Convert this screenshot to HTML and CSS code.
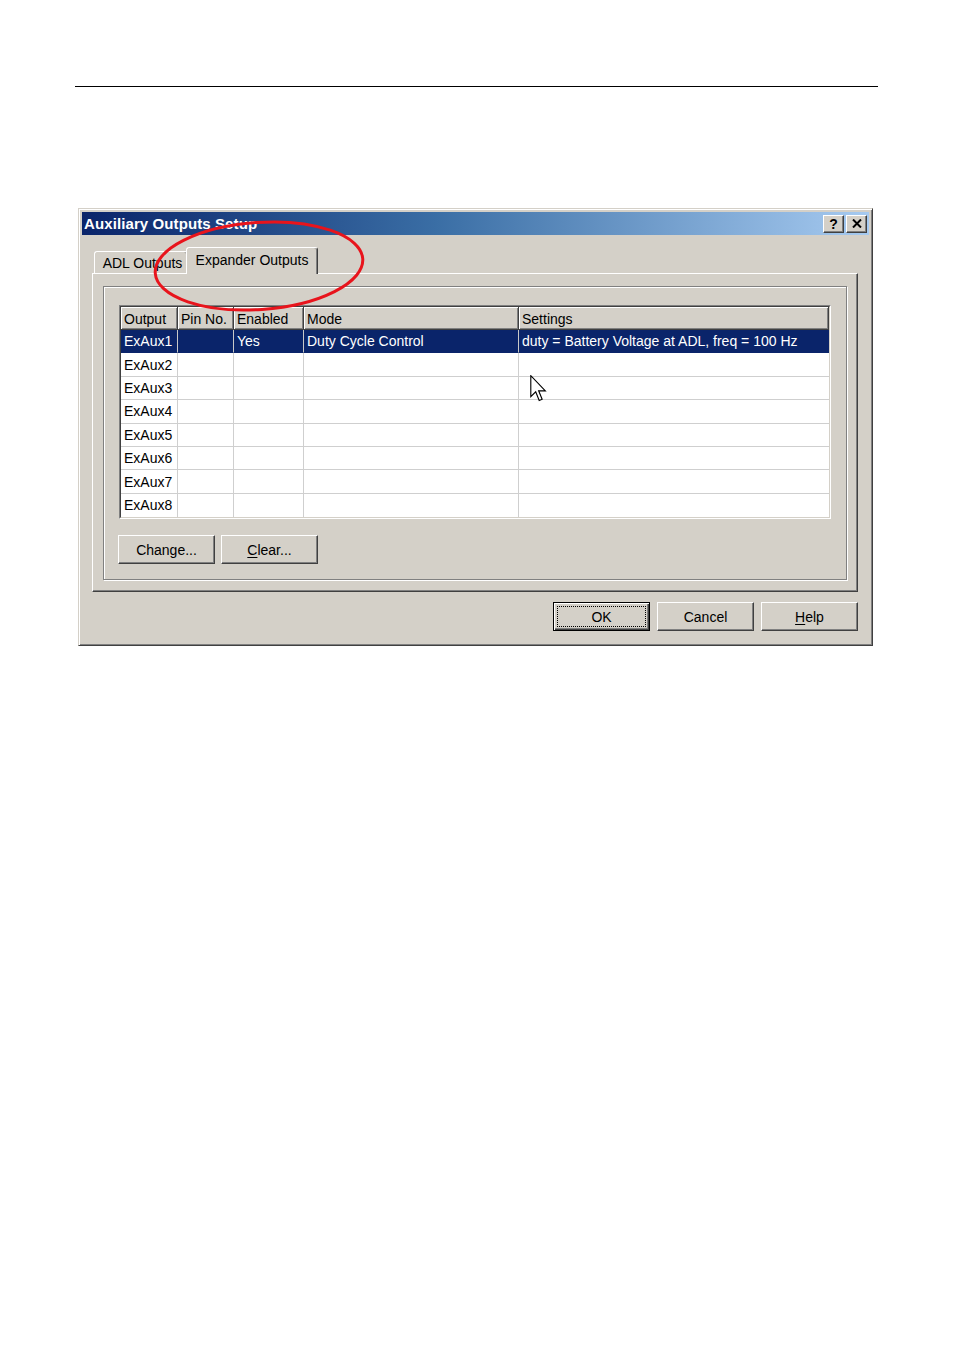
FILE: index.html
```html
<!DOCTYPE html>
<html>
<head>
<meta charset="utf-8">
<title>Auxiliary Outputs Setup</title>
<link rel="stylesheet" href="styles.css">
</head>
<body>
<div class="page">
  <div class="rule"></div>
  <div class="dialog">
    <div class="titlebar">
      <span class="title">Auxiliary Outputs Setup</span>
      <div class="caption-btns">
        <span class="cbtn help">?</span>
        <span class="cbtn close"><svg width="10" height="9" viewBox="0 0 10 9"><path d="M1 0.5 L9 8.5 M9 0.5 L1 8.5" stroke="#000" stroke-width="2"/></svg></span>
      </div>
    </div>
    <div class="dlg-body">
      <div class="tabs">
        <div class="tab">ADL Outputs</div>
        <div class="tab active">Expander Outputs</div>
      </div>
      <div class="panel">
        <div class="group">
          <div class="grid">
            <div class="grid-inner">
              <div class="row head">
                <div class="cell">Output</div>
                <div class="cell">Pin No.</div>
                <div class="cell">Enabled</div>
                <div class="cell">Mode</div>
                <div class="cell">Settings</div>
              </div>
              <div class="row sel">
                <div class="cell">ExAux1</div>
                <div class="cell"></div>
                <div class="cell">Yes</div>
                <div class="cell">Duty Cycle Control</div>
                <div class="cell">duty = Battery Voltage at ADL, freq = 100 Hz</div>
              </div>
              <div class="row"><div class="cell">ExAux2</div><div class="cell"></div><div class="cell"></div><div class="cell"></div><div class="cell"></div></div>
              <div class="row"><div class="cell">ExAux3</div><div class="cell"></div><div class="cell"></div><div class="cell"></div><div class="cell"></div></div>
              <div class="row"><div class="cell">ExAux4</div><div class="cell"></div><div class="cell"></div><div class="cell"></div><div class="cell"></div></div>
              <div class="row"><div class="cell">ExAux5</div><div class="cell"></div><div class="cell"></div><div class="cell"></div><div class="cell"></div></div>
              <div class="row"><div class="cell">ExAux6</div><div class="cell"></div><div class="cell"></div><div class="cell"></div><div class="cell"></div></div>
              <div class="row"><div class="cell">ExAux7</div><div class="cell"></div><div class="cell"></div><div class="cell"></div><div class="cell"></div></div>
              <div class="row last"><div class="cell">ExAux8</div><div class="cell"></div><div class="cell"></div><div class="cell"></div><div class="cell"></div></div>
            </div>
          </div>
          <div class="btnrow">
            <button class="btn">Change...</button>
            <button class="btn"><u>C</u>lear...</button>
          </div>
        </div>
      </div>
      <div class="footer">
        <button class="btn default"><span class="focus">OK</span></button>
        <button class="btn">Cancel</button>
        <button class="btn"><u>H</u>elp</button>
      </div>
    </div>
    <svg class="annot" width="220" height="100" viewBox="0 0 220 100">
      <ellipse cx="110" cy="50" rx="104" ry="43.5" transform="rotate(-4 110 50)" fill="none" stroke="#e8141c" stroke-width="3"/>
    </svg>
    <svg class="cursor" width="17" height="28" viewBox="0 0 12 20">
      <polygon points="0.5,0.5 0.5,15.5 4,12 6.5,18.2 8.6,17.3 6.1,11.3 10.9,11.3" fill="#fff" stroke="#000" stroke-width="0.8" stroke-linejoin="miter"/>
    </svg>
  </div>
</div>
</body>
</html>
```

FILE: styles.css
```css
html, body {
  margin: 0;
  padding: 0;
  background: #fff;
}

body {
  font-family: "Liberation Sans", Arial, sans-serif;
  font-size: 14px;
  color: #000;
}

.page {
  width: 954px;
  padding-top: 86px;
}

.rule {
  margin: 0 0 0 75px;
  width: 803px;
  height: 0;
  border-top: 1px solid #000;
}

.dialog {
  position: relative;
  box-sizing: border-box;
  width: 795px;
  margin: 121px 0 0 78px;
  padding: 3px;
  background: #d4d0c8;
  border: 1px solid;
  border-color: #d4d0c8 #404040 #404040 #d4d0c8;
  box-shadow: inset 1px 1px 0 #fff, inset -1px -1px 0 #808080;
}

.titlebar {
  height: 23px;
  display: flex;
  align-items: center;
  justify-content: space-between;
  padding: 0 2px;
  background: linear-gradient(to right, #0a246a 0%, #3a6ea5 45%, #a6caf0 100%);
}

.title {
  color: #fff;
  font-weight: bold;
  font-size: 15px;
  letter-spacing: 0.1px;
}

.caption-btns {
  display: flex;
  gap: 2px;
}

.cbtn {
  box-sizing: border-box;
  width: 21px;
  height: 18px;
  display: flex;
  align-items: center;
  justify-content: center;
  background: #d4d0c8;
  border: 1px solid;
  border-color: #fff #404040 #404040 #fff;
  box-shadow: inset -1px -1px 0 #808080;
  font-weight: bold;
  font-size: 14px;
  line-height: 1;
}

.dlg-body {
  padding: 12px 11px 11px 10px;
}

.tabs {
  display: flex;
  align-items: flex-end;
  height: 26px;
  padding-left: 2px;
}

.tab {
  box-sizing: border-box;
  width: 94px;
  height: 22px;
  display: flex;
  align-items: center;
  justify-content: center;
  padding-left: 3px;
  border: 1px solid;
  border-bottom: none;
  border-color: #fff #404040 transparent #fff;
  border-radius: 3px 3px 0 0;
  box-shadow: inset -1px 0 0 #808080;
  background: #d4d0c8;
}

.tab.active {
  position: relative;
  z-index: 1;
  width: 132px;
  height: 27px;
  margin-left: -2px;
  margin-bottom: -1px;
  padding-left: 0;
  padding-bottom: 2px;
}

.panel {
  border: 1px solid;
  border-color: #fff #404040 #404040 #fff;
  box-shadow: inset -1px -1px 0 #808080;
  padding: 12px 10px 11px;
}

.group {
  border: 1px solid #808080;
  box-shadow: 1px 1px 0 #fff, inset 1px 1px 0 #fff;
  padding: 18px 15px 15px;
}

.grid {
  border: 1px solid;
  border-color: #808080 #fff #fff #808080;
}

.grid-inner {
  border: 1px solid;
  border-color: #404040 #d4d0c8 #d4d0c8 #404040;
  background: #fff;
}

.row {
  display: grid;
  grid-template-columns: 57px 56px 70px 215px 1fr;
  height: 23.4px;
}

.cell {
  box-sizing: border-box;
  padding-left: 3px;
  border-right: 1px solid #cfcfcf;
  border-bottom: 1px solid #cfcfcf;
  display: flex;
  align-items: center;
  white-space: nowrap;
  overflow: hidden;
}

.row .cell:last-child {
  border-right: none;
}

.row.last .cell {
  border-bottom: none;
}

.row.head {
  height: 23px;
}

.row.head .cell {
  background: #d4d0c8;
  border-right: 1px solid #404040;
  border-bottom: 1px solid #404040;
  box-shadow: inset 1px 1px 0 #fff, inset -1px -1px 0 #808080;
  padding-top: 1px;
}

.row.head .cell:last-child {
  border-right: 1px solid #404040;
}

.row.sel .cell {
  background: #0a246a;
  color: #fff;
  border-right-color: #c8c8c8;
  border-bottom-color: #0a246a;
}

.btnrow {
  display: flex;
  gap: 6px;
  margin-top: 16px;
  margin-left: -1px;
}

.btn {
  box-sizing: border-box;
  width: 97px;
  height: 29px;
  padding: 0;
  background: #d4d0c8;
  border: 1px solid;
  border-color: #fff #404040 #404040 #fff;
  box-shadow: inset -1px -1px 0 #808080;
  font-family: "Liberation Sans", Arial, sans-serif;
  font-size: 14px;
  color: #000;
  display: flex;
  align-items: center;
  justify-content: center;
}

.btn u {
  text-decoration-thickness: 1px;
  text-underline-offset: 2px;
}

.btn.default {
  border: 1px solid #000;
  box-shadow: inset 1px 1px 0 #fff, inset -1px -1px 0 #404040, inset -2px -2px 0 #808080;
  align-items: stretch;
}

.focus {
  flex: 1;
  margin: 3px;
  border: 1px dotted #000;
  display: flex;
  align-items: center;
  justify-content: center;
}

.footer {
  display: flex;
  justify-content: flex-end;
  gap: 7px;
  margin-top: 10px;
}

.annot {
  position: absolute;
  left: 70px;
  top: 7px;
  z-index: 5;
  pointer-events: none;
}

.cursor {
  position: absolute;
  left: 451px;
  top: 166px;
  z-index: 6;
}
```
